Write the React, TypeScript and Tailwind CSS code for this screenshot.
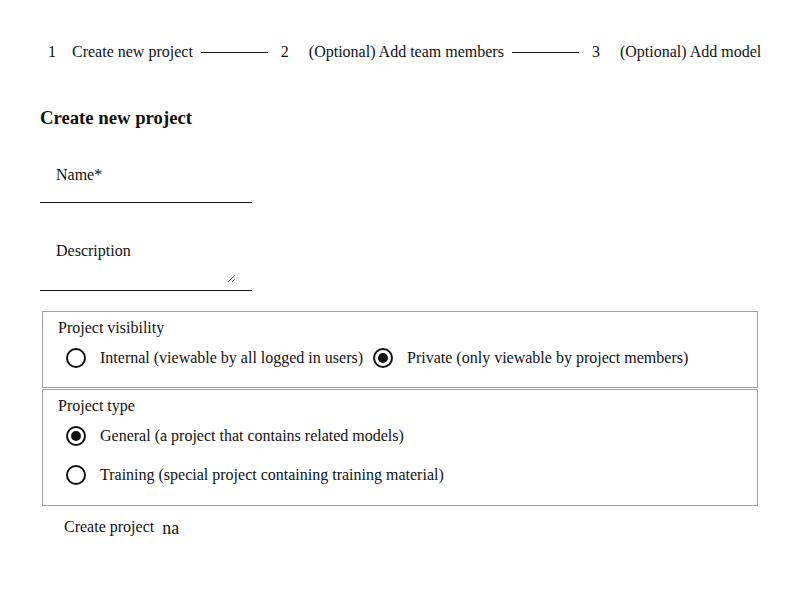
import { ReactNode } from 'react';

const STEPS = ['Create new project', '(Optional) Add team members', '(Optional) Add model'];

function Radio({ checked }: { checked?: boolean }) {
  return (
    <span className="w-5 h-5 rounded-full border-2 border-[#111] flex items-center justify-center shrink-0">
      {checked && <span className="w-[10px] h-[10px] rounded-full bg-[#111]" />}
    </span>
  );
}

function Option({ checked, children, className = '' }: { checked?: boolean; children: ReactNode; className?: string }) {
  return (
    <label className={`flex items-center h-6 ${className}`}>
      <Radio checked={checked} />
      <span className="ml-[14px] whitespace-nowrap">{children}</span>
    </label>
  );
}

export default function App() {
  return (
    <div className="min-h-[600px] bg-white text-[#111] text-base px-10 pt-10 font-['Liberation_Serif',serif]">
      <div className="flex items-center h-6 leading-6 whitespace-nowrap">
        {STEPS.map((label, i) => (
          <div key={label} className="flex items-center shrink-0">
            {i > 0 && <span className="ml-2 w-[67px] h-px bg-[#111] shrink-0" />}
            <span className={i > 0 ? 'ml-[13px]' : 'ml-2'}>{i + 1}</span>
            <span className={i > 0 ? 'ml-5' : 'ml-4'}>{label}</span>
          </div>
        ))}
      </div>

      <h3 className="mt-[42px] text-[18.72px] font-bold leading-6">Create new project</h3>

      <div className="mt-[33px] w-[212px] border-b border-[#111] px-4 pb-[15px]">
        <div className="leading-6">Name*</div>
      </div>

      <div className="relative mt-9 w-[212px] border-b border-[#111] px-4 pb-[27px]">
        <div className="leading-6">Description</div>
        <svg className="absolute right-4 bottom-[7px]" width="9" height="9" viewBox="0 0 9 9">
          <path d="M1 8 L8 1 M5 8 L8 5" stroke="#777" strokeWidth="1" />
        </svg>
      </div>

      <div className="mt-5 ml-[2px] w-[716px] border border-[#a0a0a0] pl-[15px] pt-1 pb-[17px] leading-6">
        <div>Project visibility</div>
        <div className="mt-[6px] ml-2 flex items-center">
          <Option>Internal (viewable by all logged in users)</Option>
          <Option checked className="ml-[10px]">Private (only viewable by project members)</Option>
        </div>
      </div>

      <div className="mt-px ml-[2px] w-[716px] border border-[#a0a0a0] pl-[15px] pt-1 pb-[18px] leading-6">
        <div>Project type</div>
        <Option checked className="mt-[6px] ml-2">General (a project that contains related models)</Option>
        <Option className="mt-[15px] ml-2">Training (special project containing training material)</Option>
      </div>

      <div className="mt-[9px] ml-6 flex items-center h-6 leading-6">
        <span>Create project</span>
        <span className="ml-2 w-[17px] overflow-hidden inline-block text-[18px] leading-6 pt-px">name</span>
      </div>
    </div>
  );
}
